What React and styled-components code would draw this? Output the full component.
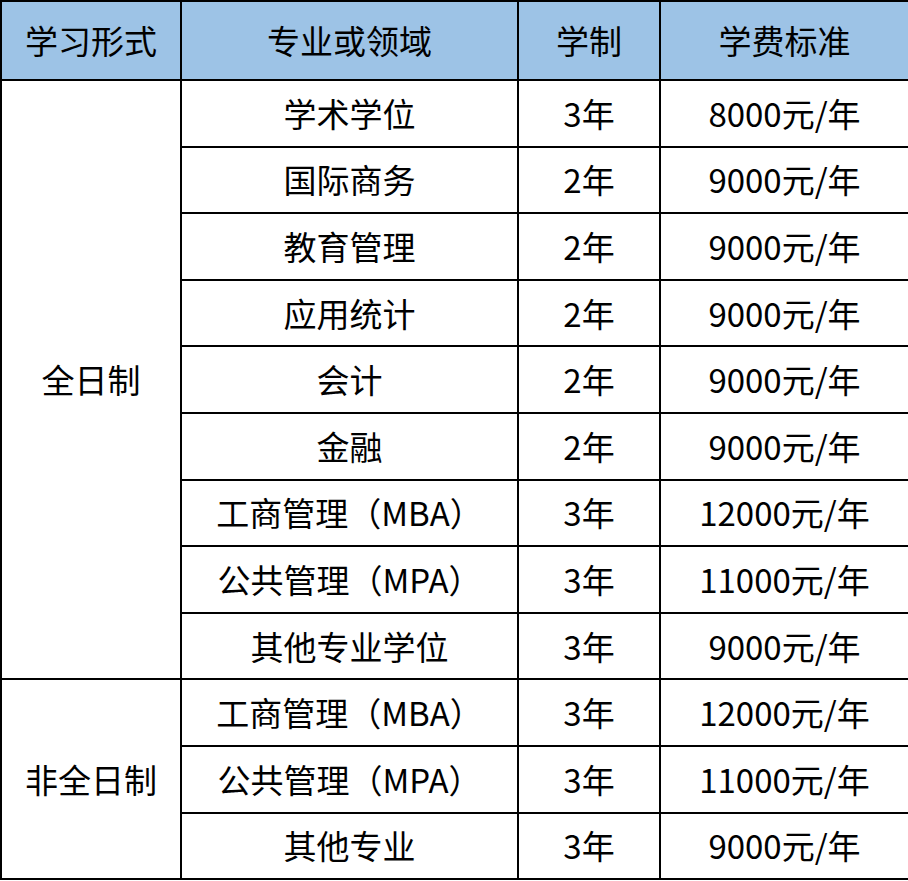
import React from 'react';
import styled, { createGlobalStyle } from 'styled-components';

const GlobalStyle = createGlobalStyle`
  html, body {
    margin: 0;
    padding: 0;
    background: #ffffff;
  }
  body {
    font-family: "Noto Sans CJK SC", "Noto Sans", sans-serif;
    color: #000;
  }
`;

const FeeTable = styled.table`
  border-collapse: collapse;
  width: 908px;
  table-layout: fixed;
  font-size: 33px;
  line-height: 1;
`;

const HeadCell = styled.th`
  background: #9dc3e6;
  border: 2px solid #000;
  font-weight: normal;
  height: 77px;
  padding: 0;
  text-align: center;
  vertical-align: middle;
`;

const Cell = styled.td`
  border: 2px solid #000;
  height: 64.6px;
  padding: 0;
  text-align: center;
  vertical-align: middle;
`;

const columns = [
  { title: '学习形式', width: 180 },
  { title: '专业或领域', width: 337 },
  { title: '学制', width: 142 },
  { title: '学费标准', width: 249 },
];

const groups = [
  {
    mode: '全日制',
    rows: [
      ['学术学位', '3年', '8000元/年'],
      ['国际商务', '2年', '9000元/年'],
      ['教育管理', '2年', '9000元/年'],
      ['应用统计', '2年', '9000元/年'],
      ['会计', '2年', '9000元/年'],
      ['金融', '2年', '9000元/年'],
      ['工商管理（MBA）', '3年', '12000元/年'],
      ['公共管理（MPA）', '3年', '11000元/年'],
      ['其他专业学位', '3年', '9000元/年'],
    ],
  },
  {
    mode: '非全日制',
    rows: [
      ['工商管理（MBA）', '3年', '12000元/年'],
      ['公共管理（MPA）', '3年', '11000元/年'],
      ['其他专业', '3年', '9000元/年'],
    ],
  },
];

function App() {
  return (
    <>
      <GlobalStyle />
      <FeeTable>
        <colgroup>
          {columns.map((c) => (
            <col key={c.title} style={{ width: c.width }} />
          ))}
        </colgroup>
        <thead>
          <tr>
            {columns.map((c) => (
              <HeadCell key={c.title}>{c.title}</HeadCell>
            ))}
          </tr>
        </thead>
        <tbody>
          {groups.map((g) =>
            g.rows.map((r, i) => (
              <tr key={g.mode + i}>
                {i === 0 && <Cell rowSpan={g.rows.length}>{g.mode}</Cell>}
                {r.map((v, j) => (
                  <Cell key={j}>{v}</Cell>
                ))}
              </tr>
            ))
          )}
        </tbody>
      </FeeTable>
    </>
  );
}

export default App;
